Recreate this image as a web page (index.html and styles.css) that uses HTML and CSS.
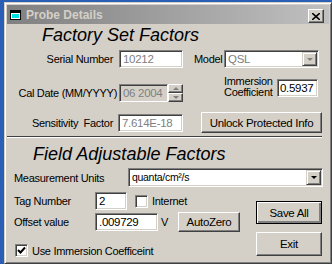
FILE: index.html
```html
<!DOCTYPE html>
<html lang="en">
<head>
  <meta charset="UTF-8" />
  <title>Probe Details</title>
  <link rel="stylesheet" href="styles.css">
</head>
<body>

  <div class="window">
    <!-- title bar -->
    <div class="titlebar">
      <svg class="app-icon" width="11" height="10" viewBox="0 0 11 10">
        <rect x="0.5" y="0.5" width="10" height="9" fill="#fff" stroke="#000"/>
        <rect x="1" y="1" width="9" height="2" fill="#000"/>
        <rect x="2" y="4" width="7" height="4" fill="#00e0e0"/>
      </svg>
      <span class="title">Probe Details</span>
      <div class="close">
        <svg width="8" height="7" viewBox="0 0 8 7">
          <path d="M0 0 L8 7 M8 0 L0 7" stroke="#000" stroke-width="1.6"/>
        </svg>
      </div>
    </div>

    <div class="client">
      <h2 class="section-title factory">Factory Set Factors</h2>

      <div class="row row-serial">
        <span class="lbl lbl-serial">Serial Number</span>
        <div class="field locked w-serial">10212</div>
        <span class="lbl lbl-model">Model</span>
        <div class="field combo locked w-model">
          <span class="combo-text">QSL</span>
          <span class="drop"><span class="tri tri-down grey"></span></span>
        </div>
      </div>

      <div class="row row-cal">
        <div class="cal-group">
          <span class="lbl lbl-cal">Cal Date (MM/YYYY)</span>
          <div class="field disabled w-cal">06 2004</div>
          <div class="spinner">
            <span class="spin"><span class="tri tri-up grey"></span></span>
            <span class="spin"><span class="tri tri-down grey"></span></span>
          </div>
        </div>
        <div class="imm-group">
          <span class="lbl lbl-imm">Immersion<br>Coefficient</span>
          <div class="field w-imm">0.5937</div>
        </div>
      </div>

      <div class="row row-sens">
        <span class="lbl lbl-sens">Sensitivity&nbsp; Factor</span>
        <div class="field locked w-sens">7.614E-18</div>
        <div class="btn btn-unlock">Unlock Protected Info</div>
      </div>

      <div class="separator"></div>

      <h2 class="section-title field-adj">Field Adjustable Factors</h2>

      <div class="row row-units">
        <span class="lbl lbl-units">Measurement Units</span>
        <div class="field combo w-units">
          <span class="combo-text small">quanta/cm²/s</span>
          <span class="drop"><span class="tri tri-down"></span></span>
        </div>
      </div>

      <div class="bottom">
        <div class="left-col">
          <div class="row row-tag">
            <span class="lbl lbl-left">Tag Number</span>
            <div class="field w-tag">2</div>
            <span class="check check-internet"></span>
            <span class="check-label">Internet</span>
          </div>
          <div class="row row-offset">
            <span class="lbl lbl-left">Offset value</span>
            <div class="field w-offset">.009729</div>
            <span class="unit">V</span>
            <div class="btn btn-autozero">AutoZero</div>
          </div>
          <div class="row row-use">
            <span class="check checked">
              <svg width="9" height="9" viewBox="0 0 9 9">
                <path d="M1 4 L3.5 6.5 L8 1.5" stroke="#000" stroke-width="2" fill="none"/>
              </svg>
            </span>
            <span class="check-label">Use Immersion Coefficeint</span>
          </div>
        </div>
        <div class="right-col">
          <div class="btn btn-save">Save All</div>
          <div class="btn btn-exit">Exit</div>
        </div>
      </div>
    </div>
  </div>

</body>
</html>
```

FILE: styles.css
```css
* {
  margin: 0;
  padding: 0;
  box-sizing: border-box;
}

body {
  width: 332px;
  height: 264px;
  overflow: hidden;
  background-color: #2a5fb5;
  font-family: "Liberation Sans", Arial, sans-serif;
  font-size: 11px;
  letter-spacing: -0.3px;
  color: #000;
}

/* window frame */
.window {
  margin: 2px 0 0 4px;
  width: 328px;
  height: 262px;
  background-color: #d4d0c8;
  border: 1px solid #d4d0c8;
  border-right-color: #404040;
  border-bottom-color: #404040;
  box-shadow: inset 1px 1px #fff, inset -1px -1px #808080;
  padding: 2px;
}

.titlebar {
  height: 19px;
  display: flex;
  align-items: center;
  padding-left: 3px;
  background: linear-gradient(to right, #808080, #c0c0c0);
}

.app-icon {
  margin-right: 5px;
}

.title {
  font-weight: bold;
  font-size: 12px;
  letter-spacing: 0;
  color: #d4d0c8;
}

.close {
  margin-left: auto;
  margin-right: 5px;
  margin-top: 3px;
  width: 16px;
  height: 14px;
  display: flex;
  align-items: center;
  justify-content: center;
  background-color: #d4d0c8;
  border: 1px solid;
  border-color: #fff #404040 #404040 #fff;
  box-shadow: inset -1px -1px #808080;
}

/* headings */
.section-title {
  font-style: italic;
  font-weight: normal;
  font-size: 18px;
  letter-spacing: 0;
  line-height: 20px;
  height: 20px;
}

.factory {
  margin-top: 1px;
  padding-left: 35px;
}

.field-adj {
  margin-top: 6px;
  padding-left: 26px;
}

/* rows */
.row {
  display: flex;
  align-items: center;
}

.lbl {
  white-space: nowrap;
}

.row-serial {
  margin-top: 5px;
  height: 18px;
}

.lbl-serial {
  width: 106px;
  text-align: right;
  margin-right: 6px;
}

.lbl-model {
  width: 30px;
  margin-left: 11px;
}

.row-cal {
  margin-top: 8px;
  align-items: flex-start;
}

.cal-group {
  display: flex;
  align-items: center;
  margin-top: 8px;
}

.lbl-cal {
  width: 110px;
  text-align: right;
  margin-right: 2px;
}

.imm-group {
  display: flex;
  align-items: flex-start;
  margin-left: 41px;
}

.lbl-imm {
  width: 53px;
  line-height: 11px;
}

.row-sens {
  margin-top: 10px;
  height: 21px;
}

.lbl-sens {
  width: 106px;
  text-align: right;
  margin-right: 5px;
}

.separator {
  margin-top: 3px;
  width: 315px;
  height: 2px;
  border-top: 1px solid #404040;
  border-bottom: 1px solid #fff;
}

.row-units {
  margin-top: 4px;
  height: 19px;
}

.lbl-units {
  width: 121px;
  padding-left: 7px;
}

.bottom {
  display: flex;
  margin-top: 5px;
}

.left-col {
  width: 249px;
}

.right-col {
  display: flex;
  flex-direction: column;
}

.row-tag {
  height: 18px;
}

.lbl-left {
  width: 88px;
  padding-left: 7px;
}

.row-offset {
  margin-top: 2px;
  height: 20px;
}

.unit {
  width: 17px;
  padding-left: 3px;
}

.row-use {
  margin-top: 12px;
  padding-left: 8px;
}

/* 3d fields */
.field {
  height: 18px;
  background-color: #fff;
  border: 1px solid;
  border-color: #808080 #fff #fff #808080;
  box-shadow: inset 1px 1px #404040, inset -1px -1px #d4d0c8;
  padding: 0 3px;
  line-height: 16px;
  font-size: 11.5px;
  white-space: nowrap;
  overflow: hidden;
}

.field.locked {
  color: #808080;
}

.field.disabled {
  background-color: #d4d0c8;
  color: #808080;
}

.w-serial { width: 64px; }
.w-model { width: 95px; }
.w-cal { width: 49px; }
.w-imm { width: 41px; margin-top: 3px; padding: 0 2px; }
.w-sens { width: 65px; }
.w-units { width: 195px; height: 19px; }
.w-tag { width: 32px; }
.w-offset { width: 63px; }

.combo {
  display: flex;
  align-items: stretch;
  padding: 1px 1px 1px 3px;
}

.combo-text {
  flex: 1;
  line-height: 14px;
}

.combo-text.small {
  font-size: 10.5px;
}

.drop {
  width: 15px;
  display: flex;
  align-items: center;
  justify-content: center;
  background-color: #d4d0c8;
  border: 1px solid;
  border-color: #d4d0c8 #404040 #404040 #d4d0c8;
  box-shadow: inset 1px 1px #fff, inset -1px -1px #808080;
}

.spinner {
  width: 15px;
  height: 18px;
  display: flex;
  flex-direction: column;
}

.spin {
  flex: 1;
  display: flex;
  align-items: center;
  justify-content: center;
  background-color: #d4d0c8;
  border: 1px solid;
  border-color: #fff #404040 #404040 #fff;
  box-shadow: inset -1px -1px #808080;
}

.tri {
  width: 0;
  height: 0;
  border-left: 3px solid transparent;
  border-right: 3px solid transparent;
}

.tri-down {
  border-top: 3px solid #000;
}

.tri-up {
  border-bottom: 3px solid #000;
}

.tri-down.grey {
  border-top-color: #808080;
}

.tri-up.grey {
  border-bottom-color: #808080;
}

/* buttons */
.btn {
  display: flex;
  align-items: center;
  justify-content: center;
  background-color: #d4d0c8;
  border: 1px solid;
  border-color: #fff #404040 #404040 #fff;
  box-shadow: inset -1px -1px #808080;
  font-size: 11.5px;
  white-space: nowrap;
}

.btn-unlock {
  margin-left: 18px;
  width: 121px;
  height: 21px;
}

.btn-autozero {
  margin-left: 3px;
  width: 62px;
  height: 20px;
}

.btn-save {
  margin-top: 9px;
  width: 66px;
  height: 23px;
  border-color: #000;
  box-shadow: inset 1px 1px #fff, inset -2px -2px #808080;
}

.btn-exit {
  margin-top: 8px;
  width: 66px;
  height: 24px;
}

/* checkboxes */
.check {
  width: 13px;
  height: 13px;
  background-color: #fff;
  border: 1px solid;
  border-color: #808080 #fff #fff #808080;
  box-shadow: inset 1px 1px #404040, inset -1px -1px #d4d0c8;
  display: flex;
  align-items: center;
  justify-content: center;
}

.check-internet {
  margin-left: 8px;
}

.check-label {
  margin-left: 4px;
  white-space: nowrap;
}
```
